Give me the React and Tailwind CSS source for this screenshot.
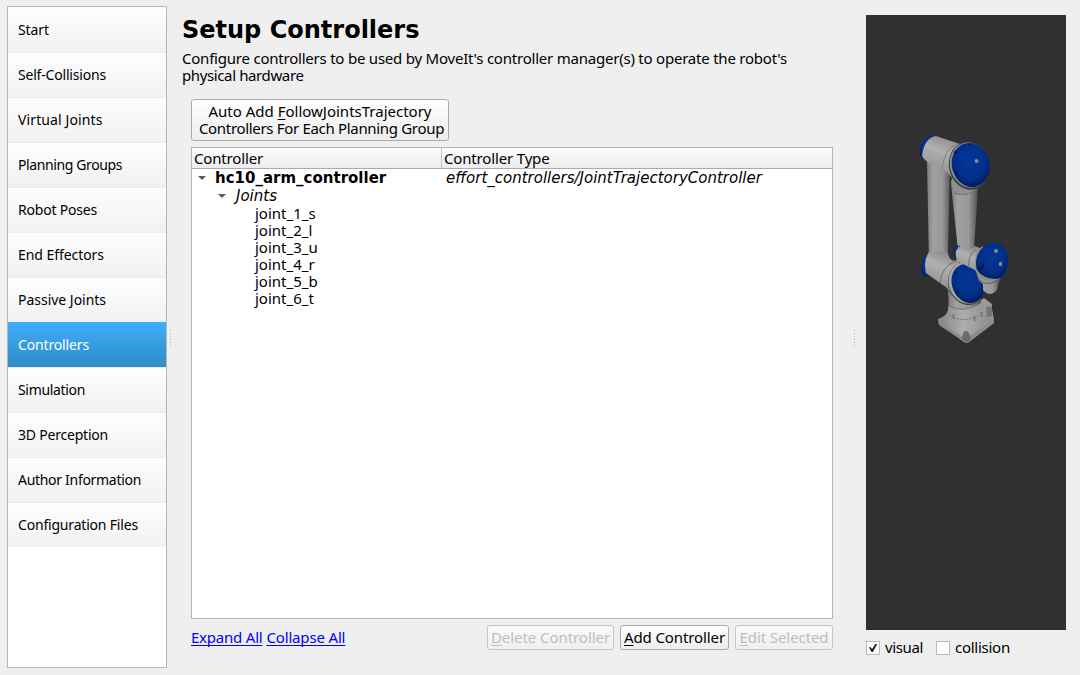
const NAV = [
  { label: "Start", track: "tracking-[-0.08px]" },
  { label: "Self-Collisions", track: "tracking-[-0.19px]" },
  { label: "Virtual Joints", track: "tracking-[0.12px]" },
  { label: "Planning Groups", track: "tracking-[-0.39px]" },
  { label: "Robot Poses", track: "tracking-[-0.2px]" },
  { label: "End Effectors", track: "tracking-[-0.06px]" },
  { label: "Passive Joints", track: "tracking-[-0.02px]" },
  { label: "Controllers", track: "tracking-[-0.15px]", active: true },
  { label: "Simulation", track: "tracking-[-0.33px]" },
  { label: "3D Perception", track: "tracking-[-0.21px]" },
  { label: "Author Information", track: "tracking-[-0.3px]" },
  { label: "Configuration Files", track: "tracking-[-0.19px]" },
];

const JOINTS = ["joint_1_s", "joint_2_l", "joint_3_u", "joint_4_r", "joint_5_b", "joint_6_t"];

function Sidebar() {
  return (
    <nav className="flex w-40 shrink-0 flex-col border border-[#b5b5b5] bg-white text-[14px]">
      {NAV.map(({ label, track, active }) => (
        <div
          key={label}
          className={`flex h-[45px] items-center pl-2.5 ${track} ${
            active
              ? "bg-linear-to-b from-[#3daefb] to-[#308cc6] text-white"
              : "bg-linear-to-b from-[#fefefe] to-[#f1f1f1] shadow-[inset_0_1px_0_#ebebeb] first:shadow-none"
          }`}
        >
          {label}
        </div>
      ))}
    </nav>
  );
}

function Grip() {
  return (
    <div className="flex flex-col gap-[2px]">
      {[0, 1, 2, 3, 4, 5].map((i) => (
        <i key={i} className="block size-px bg-[#b0b0b0]" />
      ))}
    </div>
  );
}

function Mnemonic({ children }) {
  return <span className="underline decoration-1 underline-offset-2">{children}</span>;
}

function Button({ className, disabled, children }) {
  return (
    <button
      disabled={disabled}
      className={`flex shrink-0 items-center justify-center rounded-[3px] border bg-linear-to-b whitespace-nowrap ${
        disabled
          ? "border-[#c6c6c6] from-[#fafafa] to-[#efefef] text-[#bebebe]"
          : "border-[#ababab] from-[#fefefe] to-[#eeeeee] text-black"
      } ${className}`}
    >
      {children}
    </button>
  );
}

function Arrow() {
  return (
    <svg width="8" height="4" viewBox="0 0 8 4" className="shrink-0">
      <path d="M0 0H8L4 4Z" fill="#5a5a5a" />
    </svg>
  );
}

function ControllerTree() {
  return (
    <div className="ml-[9px] mt-[6px] flex h-[472px] w-[642px] flex-col border border-[#b5b5b5] bg-white">
      <div className="flex h-[21px] border-b border-[#ababab] bg-linear-to-b from-[#fdfdfd] to-[#ececec] leading-[17px] tracking-[-0.16px]">
        <div className="w-[250px] border-r border-[#c4c4c4] pl-[2px] pt-[2px]">Controller</div>
        <div className="pl-[2px] pt-[2px]">Controller Type</div>
      </div>
      <div className="flex h-[18px] items-center font-['DejaVu_Sans'] leading-[18px]">
        <div className="flex w-[254px] items-center gap-[9px] pl-[6px] font-bold">
          <Arrow />
          <span>hc10_arm_controller</span>
        </div>
        <span className="italic">effort_controllers/JointTrajectoryController</span>
      </div>
      <div className="flex h-[18px] items-center gap-[10px] pl-[26px] font-['DejaVu_Sans'] italic leading-[18px]">
        <Arrow />
        <span>Joints</span>
      </div>
      {JOINTS.map((joint) => (
        <div key={joint} className="h-[17px] pl-[63px] leading-[17px]">
          {joint}
        </div>
      ))}
    </div>
  );
}

function RobotArm() {
  return (
    <svg width="200" height="615" viewBox="866 15 200 615" className="block">
      <defs>
        <linearGradient id="limb" x1="0" x2="1">
          <stop offset="0" stopColor="#7c7c7c" />
          <stop offset=".25" stopColor="#a0a0a0" />
          <stop offset=".65" stopColor="#999" />
          <stop offset="1" stopColor="#505050" />
        </linearGradient>
        <linearGradient id="tube" x1=".65" y1="0" x2=".3" y2="1">
          <stop offset="0" stopColor="#858585" />
          <stop offset=".35" stopColor="#b0b0b0" />
          <stop offset=".7" stopColor="#999" />
          <stop offset="1" stopColor="#444" />
        </linearGradient>
        <radialGradient id="cap" cx=".5" cy=".4" r=".62">
          <stop offset="0" stopColor="#033799" />
          <stop offset=".65" stopColor="#022f8a" />
          <stop offset="1" stopColor="#011d58" />
        </radialGradient>
        <linearGradient id="base" x1="0" x2="1">
          <stop offset="0" stopColor="#858585" />
          <stop offset=".45" stopColor="#adadad" />
          <stop offset="1" stopColor="#8a8a8a" />
        </linearGradient>
      </defs>

      {/* base */}
      <path d="M980 301L984 298L992 304L992 309L994 320L984 320Z" fill="#999" />
      <path d="M986 307L992 306V316L987 318Z" fill="#777" />
      <path d="M949 301L948 310C946 316 943 317 938 319L939 324L964 342Q967 344 970 341L994 323L993 319C985 317 982 310 981 303Z" fill="url(#base)" />
      <path d="M938 320L964 338L967 338L994 320L994 323L969 342Q966 344 963 341L939 325Z" fill="#8b8b8b" />
      <path d="M962 340L963 333Q966 329 969 333L971 339L967 342Z" fill="#6b6b6b" />
      <path d="M949 315Q963 325 984 313" fill="none" stroke="#777" strokeDasharray="2 1" />
      <path d="M953 314L954 319M974 316L975 321M981 312L982 317" stroke="#606060" />
      <path d="M948 292L949 306Q964 314 981 303L980 293Z" fill="url(#limb)" />
      <path d="M949 306Q964 314 981 303" fill="none" stroke="#777" />

      {/* long links */}
      <path d="M927 160L929 262L951 264L948 252L950 166Z" fill="url(#limb)" />
      <path d="M951 184L958 250Q966 258 974 250L978 186Z" fill="url(#limb)" />

      {/* elbow */}
      <ellipse cx="928" cy="147" rx="7" ry="12" transform="rotate(28 928 147)" fill="url(#cap)" />
      <path d="M936 136Q924 138 922 156Q926 164 947 172L957 184L970 150L960 144Z" fill="url(#tube)" />
      <path d="M958 144Q944 148 942 169" fill="none" stroke="#808080" />
      <path d="M951 182Q952 189 957 194Q968 198 978 187L977 178L953 174Z" fill="#909090" />
      <path d="M955 193Q966 198 978 188" fill="none" stroke="#606060" strokeDasharray="2 1" />
      <ellipse cx="969" cy="166" rx="20" ry="24" transform="rotate(-15 969 166)" fill="#404040" />
      <ellipse cx="969.5" cy="165" rx="19.5" ry="22.8" transform="rotate(-15 969.5 165)" fill="#909090" />
      <ellipse cx="970.7" cy="165" rx="18.8" ry="22.3" transform="rotate(-15 970.7 165)" fill="url(#cap)" />
      <path d="M954 152L957 153M956 172L958 173M973 182L974 185M969 144L971 145" stroke="#021746" strokeWidth="2" />
      <circle cx="976.5" cy="161" r="2" fill="#8b8b8b" />

      {/* shoulder */}
      <ellipse cx="927" cy="265" rx="5.5" ry="12" transform="rotate(12 927 265)" fill="url(#cap)" />
      <path d="M929 252Q923 260 926 273L947 288L951 296L966 270L957 260Q950 263 947 252Z" fill="url(#tube)" />
      <path d="M957 260Q941 267 940 283" fill="none" stroke="#6c6c6c" />
      <ellipse cx="966" cy="284" rx="17.5" ry="21.5" transform="rotate(-20 966 284)" fill="#484848" />
      <ellipse cx="966.5" cy="283" rx="17.5" ry="21" transform="rotate(-20 966.5 283)" fill="#a6a6a6" />
      <ellipse cx="968" cy="283.5" rx="16" ry="20" transform="rotate(-20 968 283.5)" fill="url(#cap)" />
      <path d="M955 272L957 274M957 291L958 293M971 300L972 302" stroke="#021746" strokeWidth="2" />

      {/* wrist */}
      <path d="M957 245Q953 250 955 258L960 260L960 246Z" fill="url(#cap)" />
      <path d="M958 248Q954 252 957 261L975 270L981 279L990 252L980 248L975 246Q967 253 958 246Z" fill="url(#tube)" />
      <path d="M976 249Q967 256 969 268" fill="none" stroke="#707070" />
      <path d="M976 272L979 281L983 284L983 290Q990 298 997 290L999 282L1001 277Z" fill="url(#limb)" />
      <path d="M979 280Q990 288 1000 278" fill="none" stroke="#585858" />
      <path d="M983 246C975 250 973 262 977 272Q980 281 991 281Q1001 280 1004 274L983 248Z" fill="#8c8c8c" />
      <path d="M985 246Q995 239 1003 246C1008 251 1009 261 1007 267Q1005 278 997 279Q983 279 977 270C974 261 978 250 985 246Z" fill="url(#cap)" />
      <path d="M978 269L984 264M979 271L984 266" stroke="#021746" strokeWidth="1.4" />
      <circle cx="996" cy="251" r="2" fill="#858992" />
      <ellipse cx="1000.5" cy="264" rx="1.7" ry="2.2" fill="#858992" />
    </svg>
  );
}

function Check({ checked, label, className }) {
  return (
    <label className={`flex items-center gap-[5px] ${className}`}>
      <span className="flex size-3.5 items-center justify-center border border-[#b8b8b8] bg-white">
        {checked && (
          <svg width="10" height="10" viewBox="0 0 10 10">
            <path d="M1 4.5L2.5 4L4 6.2L7.6 0.8L9 1.2L4.8 9H3.6Z" fill="#111" />
          </svg>
        )}
      </span>
      <span className="leading-[17px]">{label}</span>
    </label>
  );
}

export default function App() {
  return (
    <div className="flex h-[675px] w-[1080px] overflow-hidden bg-[#efefef] font-['Noto_Sans',sans-serif] text-[15px] text-black">
      <div className="flex pb-[7px] pl-[7px] pt-[6px]">
        <Sidebar />
        <div className="flex w-[7px] items-center justify-center pt-[2px]">
          <Grip />
        </div>
      </div>

      <main className="flex w-[668px] flex-col pl-2 pt-4">
        <h1 className="h-[34px] font-['DejaVu_Sans'] text-[24px] font-bold leading-7">Setup Controllers</h1>
        <p className="whitespace-nowrap leading-[17px] tracking-[-0.22px]">
          Configure controllers to be used by MoveIt's controller manager(s) to operate the robot's
          <br />
          <span className="tracking-[-0.38px]">physical hardware</span>
        </p>
        <Button className="ml-[9px] mt-[15px] h-[42px] w-[258px] flex-col leading-[17px]">
          <span>
            Auto Add <Mnemonic>F</Mnemonic>ollowJointsTrajectory
          </span>
          <span className="pl-[3px] tracking-[-0.32px]">Controllers For Each Planning Group</span>
        </Button>
        <ControllerTree />
        <div className="ml-[9px] mt-[6px] flex w-[642px] items-center">
          <div className="flex flex-1 gap-[4px] text-[#0000ff]">
            <a className="underline decoration-1 underline-offset-2 [text-decoration-skip-ink:none] tracking-[-0.22px]">Expand All</a>
            <a className="underline decoration-1 underline-offset-2 [text-decoration-skip-ink:none] tracking-[-0.16px]">Collapse All</a>
          </div>
          <div className="flex gap-[6px]">
            <Button disabled className="h-[25px] w-[127px] tracking-[-0.06px]">
              <Mnemonic>D</Mnemonic>elete Controller
            </Button>
            <Button className="h-[25px] w-[109px] tracking-[-0.11px]">
              <Mnemonic>A</Mnemonic>dd Controller
            </Button>
            <Button disabled className="h-[25px] w-[98px] tracking-[-0.08px]">
              <Mnemonic>E</Mnemonic>dit Selected
            </Button>
          </div>
        </div>
      </main>

      <div className="flex w-6 items-center justify-center pt-px">
        <Grip />
      </div>

      <aside className="flex w-[200px] flex-col pt-[15px]">
        <div className="h-[615px] bg-[#303030]">
          <RobotArm />
        </div>
        <div className="flex pt-[9px]">
          <Check checked label="visual" className="w-[70px] tracking-[-0.37px]" />
          <Check label="collision" className="tracking-[-0.26px]" />
        </div>
      </aside>
    </div>
  );
}
